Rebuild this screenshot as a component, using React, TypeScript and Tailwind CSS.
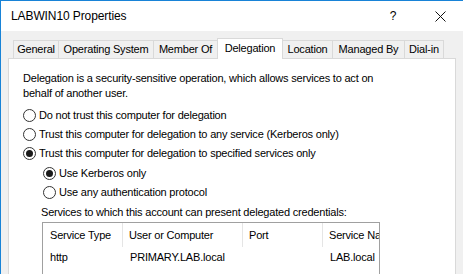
import React from 'react'

const tabs = [
  { label: 'General', w: 'w-[46px]' },
  { label: 'Operating System', w: 'w-[95px]' },
  { label: 'Member Of', w: 'w-[64px]' },
  { label: 'Delegation', w: 'w-[66px]', active: true },
  { label: 'Location', w: 'w-[50px]' },
  { label: 'Managed By', w: 'w-[72px]' },
  { label: 'Dial-in', w: 'w-[39px]' },
]

const Radio = ({ checked }: { checked?: boolean }) => (
  <span className="w-[13px] h-[13px] shrink-0 rounded-full border border-[#333333] bg-white flex items-center justify-center">
    {checked && <span className="w-[7px] h-[7px] rounded-full bg-[#1a1a1a]" />}
  </span>
)

const Option = ({ label, checked, className }: { label: string; checked?: boolean; className: string }) => (
  <div className={`flex items-center gap-[3px] ${className}`}>
    <Radio checked={checked} />
    <span>{label}</span>
  </div>
)

export default function App() {
  return (
    <div
      className="w-[463px] h-[274px] overflow-hidden bg-[#f0f0f0] border-l border-t border-[#1883d7] text-[11px] tracking-[-0.2px] text-black"
      style={{ fontFamily: '"Liberation Sans", Arial, sans-serif' }}
    >
      {/* title bar */}
      <div className="h-[30px] bg-white flex items-center pl-[10px]">
        <span className="text-[12px] tracking-[-0.1px]">LABWIN10 Properties</span>
        <span className="ml-auto text-[12px] w-[12px] text-center">?</span>
        <svg width="11" height="11" viewBox="0 0 11 11" className="ml-[36px] mr-[17px]">
          <path d="M0.5 0.5 L10.5 10.5 M10.5 0.5 L0.5 10.5" stroke="#111" strokeWidth="1" />
        </svg>
      </div>

      <div className="pl-[7px] pt-[7px]">
        {/* tab strip */}
        <div className="flex h-[20px] pl-[5px]">
          {tabs.map((t, i) =>
            t.active ? (
              <div
                key={t.label}
                className={`${t.w} -ml-px h-[21px] relative z-10 bg-white border-l border-r border-t border-[#d9d9d9] flex items-center justify-center pb-[2px]`}
              >
                {t.label}
              </div>
            ) : (
              <div
                key={t.label}
                className={`${t.w} mt-[2px] h-[18px] bg-[#f0f0f0] border-t border-r border-[#d9d9d9] ${i === 0 ? 'border-l' : ''} ${tabs[i - 1]?.active ? 'border-l-0' : ''} flex items-center justify-center`}
              >
                {t.label}
              </div>
            )
          )}
        </div>

        {/* tab page */}
        <div className="w-[448px] h-[240px] bg-white border border-[#d9d9d9] pt-[12px] pl-[14px]">
          <p className="leading-[15px]">
            Delegation is a security-sensitive operation, which allows services to act on
            <br />
            behalf of another user.
          </p>
          <Option className="mt-[4px] h-[20px]" label="Do not trust this computer for delegation" />
          <Option className="h-[19px]" label="Trust this computer for delegation to any service (Kerberos only)" />
          <Option className="h-[19px]" checked label="Trust this computer for delegation to specified services only" />
          <Option className="h-[20px] ml-[20px]" checked label="Use Kerberos only" />
          <Option className="h-[19px] ml-[20px]" label="Use any authentication protocol" />
          <div className="h-[20px] ml-[18px] flex items-center">
            Services to which this account can present delegated credentials:
          </div>

          <div className="ml-[19px] w-[338px] h-[60px] border border-[#a0a0a0] overflow-hidden">
            <div className="flex h-[24px] items-stretch whitespace-nowrap">
              <div className="w-[80px] shrink-0 pl-[7px] flex items-center border-r border-[#e5e5e5]">Service Type</div>
              <div className="w-[120px] shrink-0 pl-[6px] flex items-center border-r border-[#e5e5e5]">User or Computer</div>
              <div className="w-[80px] shrink-0 pl-[6px] flex items-center border-r border-[#e5e5e5]">Port</div>
              <div className="w-[56px] shrink-0 pl-[6px] flex items-center overflow-hidden">Service Name</div>
            </div>
            <div className="flex h-[20px] items-center whitespace-nowrap">
              <div className="w-[80px] shrink-0 pl-[7px]">http</div>
              <div className="w-[120px] shrink-0 pl-[7px]">PRIMARY.LAB.local</div>
              <div className="w-[80px] shrink-0 pl-[7px]"></div>
              <div className="w-[56px] shrink-0 pl-[7px] overflow-hidden">LAB.local</div>
            </div>
          </div>
        </div>
      </div>
    </div>
  )
}
